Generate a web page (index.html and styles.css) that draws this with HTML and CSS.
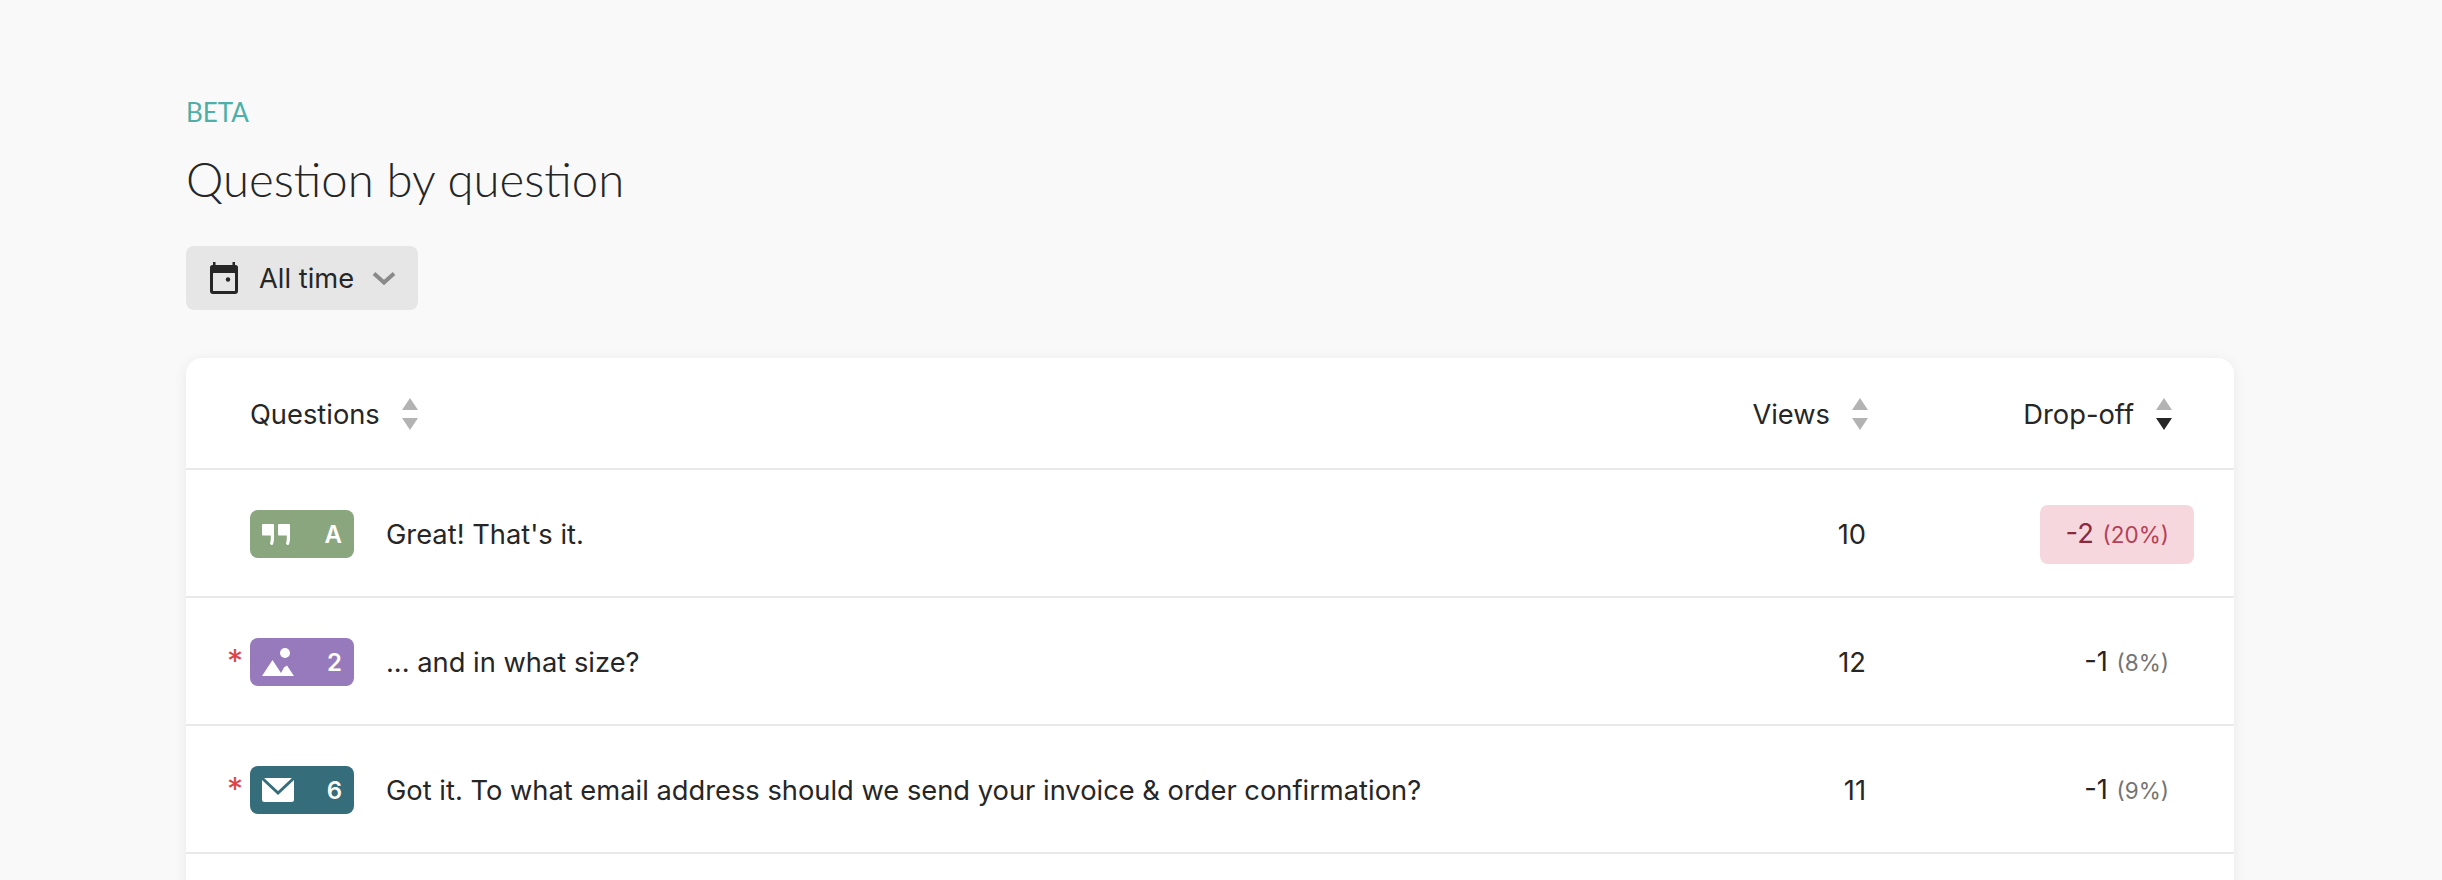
FILE: index.html
```html
<!DOCTYPE html>
<html lang="en">
<head>
<meta charset="utf-8">
<title>Question by question</title>
<link rel="stylesheet" href="styles.css">
</head>
<body>
<main class="page">
  <div class="eyebrow">BETA</div>
  <h1 class="title">Question by question</h1>
  <button class="range" type="button">
    <svg class="range-cal" viewBox="0 0 28 32" width="28" height="32" aria-hidden="true">
      <path d="M3 0h2.500v3h17V0H25v3h.5A2.500 2.500 0 0 1 28 5.500V29a3 3 0 0 1-3 3H3a3 3 0 0 1-3-3V5.500A2.500 2.500 0 0 1 2.500 3H3z" fill="#262627"/>
      <rect x="3" y="11" width="22" height="18" rx="0.5" fill="#e6e6e6"/>
      <circle cx="18" cy="17.500" r="2.200" fill="#262627"/>
    </svg>
    <span class="range-label">All time</span>
    <svg class="range-chev" viewBox="0 0 24 14" width="24" height="14" aria-hidden="true">
      <path d="M2 2.500l10 9 10-9" fill="none" stroke="#8a8a8a" stroke-width="4"/>
    </svg>
  </button>

  <section class="card">
    <div class="row head">
      <div class="col-q">
        <span>Questions</span>
        <span class="sort"><i class="up"></i><i class="down"></i></span>
      </div>
      <div class="col-v">
        <span>Views</span>
        <span class="sort"><i class="up"></i><i class="down"></i></span>
      </div>
      <div class="col-d">
        <span>Drop-off</span>
        <span class="sort"><i class="up"></i><i class="down on"></i></span>
      </div>
    </div>

    <div class="row item">
      <div class="col-q">
        <span class="req"></span>
        <span class="badge green">
          <svg viewBox="0 0 28 21" width="28" height="21" aria-hidden="true">
            <path d="M0 1a1 1 0 0 1 1-1h10a1 1 0 0 1 1 1v13c0 3-.5 5.500-1.500 7H9.500c-1-.5-1.500-1-1.500-1.500.8-2 .8-5 .8-8H1a1 1 0 0 1-1-1zM16 1a1 1 0 0 1 1-1h10a1 1 0 0 1 1 1v13c0 3-.5 5.500-1.500 7h-1c-1-.5-1.500-1-1.500-1.500.8-2 .8-5 .8-8H17a1 1 0 0 1-1-1z" fill="#fff"/>
          </svg>
          <b>A</b>
        </span>
        <span class="qtext">Great! That's it.</span>
      </div>
      <div class="col-v val">10</div>
      <div class="col-d"><span class="drop bad">-2 <small>(20%)</small></span></div>
    </div>

    <div class="row item">
      <div class="col-q">
        <span class="req">*</span>
        <span class="badge purple">
          <svg viewBox="0 0 32 28" width="32" height="28" aria-hidden="true">
            <circle cx="23" cy="5" r="5" fill="#fff"/>
            <path d="M0 28L10.500 12 19 25l3-5.500 3-2 7 10.500z" fill="#fff"/>
          </svg>
          <b>2</b>
        </span>
        <span class="qtext">... and in what size?</span>
      </div>
      <div class="col-v val">12</div>
      <div class="col-d"><span class="drop">-1 <small>(8%)</small></span></div>
    </div>

    <div class="row item">
      <div class="col-q">
        <span class="req">*</span>
        <span class="badge teal">
          <svg viewBox="0 0 32 24" width="32" height="24" aria-hidden="true">
            <rect width="32" height="24" rx="2.500" fill="#fff"/>
            <path d="M0 0l16 15L32 0" fill="none" stroke="#366d7b" stroke-width="2.800"/>
          </svg>
          <b>6</b>
        </span>
        <span class="qtext">Got it. To what email address should we send your invoice &amp; order confirmation?</span>
      </div>
      <div class="col-v val">11</div>
      <div class="col-d"><span class="drop">-1 <small>(9%)</small></span></div>
    </div>
  </section>
</main>
</body>
</html>
```

FILE: styles.css
```css
* { box-sizing: border-box; }
html, body { margin: 0; height: 880px; overflow: hidden; }
body {
  background: #f9f9f9;
  color: #262627;
  font-family: "Inter", "Liberation Sans", sans-serif;
  font-size: 27.3px;
}
.page { height: 880px; overflow: hidden; padding: 94px 208px 0 186px; }
.eyebrow {
  font-family: "Lato", "Liberation Sans", sans-serif;
  font-size: 26px;
  line-height: 36px;
  color: #4eafa9;
}
.title {
  margin: 21px 0 0;
  font-family: "Lato", "Liberation Sans", sans-serif;
  font-weight: 300;
  font-size: 47.3px;
  line-height: 56px;
}
.range {
  display: flex;
  align-items: center;
  margin-top: 39px;
  width: 232px;
  height: 64px;
  padding: 0 0 0 24px;
  border: 0;
  border-radius: 8px;
  background: #e6e6e6;
  color: #262627;
  font: inherit;
}
.range-label { margin-left: 21px; }
.range-chev { margin-left: 18px; }
.card {
  margin-top: 48px;
  min-height: 600px;
  background: #fff;
  border-radius: 16px 16px 0 0;
  box-shadow: 0 2px 14px rgba(0, 0, 0, .07);
}
.row {
  display: grid;
  grid-template-columns: 1fr 200px 366px;
  align-items: center;
  border-bottom: 2px solid #e9e9e9;
}
.head { height: 112px; padding-top: 2px; }
.item { height: 128px; padding-top: 2px; }
.col-q { display: flex; align-items: center; padding-left: 41px; }
.head .col-q { padding-left: 64px; }
.col-v, .col-d { display: flex; align-items: center; justify-content: flex-end; }
.val { padding-right: 2px; }
.col-d { padding-right: 40px; }
.head .col-d { padding-right: 62px; }
.sort { display: flex; flex-direction: column; gap: 8px; margin-left: 22px; }
.sort i { display: block; width: 0; height: 0; border-left: 8px solid transparent; border-right: 8px solid transparent; }
.sort .up { border-bottom: 12px solid #b3b3b3; }
.sort .down { border-top: 12px solid #b3b3b3; }
.sort .down.on { border-top-color: #262627; }
.req {
  width: 23px;
  height: 24px;
  color: #e04348;
  font-size: 32px;
  line-height: 24px;
}
.badge {
  display: flex;
  align-items: center;
  justify-content: space-between;
  width: 104px;
  height: 48px;
  padding: 0 12px 0 12px;
  border-radius: 8px;
  color: #fff;
}
.badge b { font-size: 24px; font-weight: 600; }
.green { background: #8aa67e; }
.purple { background: #967abb; }
.teal { background: #366d7b; }
.qtext { margin-left: 32px; }
.drop { display: inline-block; padding: 0 25px 0 26px; line-height: 58px; font-size: 27.3px; }
.drop small { margin-left: 1px; font-size: 22.5px; color: #737373; }
.bad { background: #f5d7dd; border-radius: 8px; color: #8a2a3a; }
.bad small { color: #b5405a; }
```
